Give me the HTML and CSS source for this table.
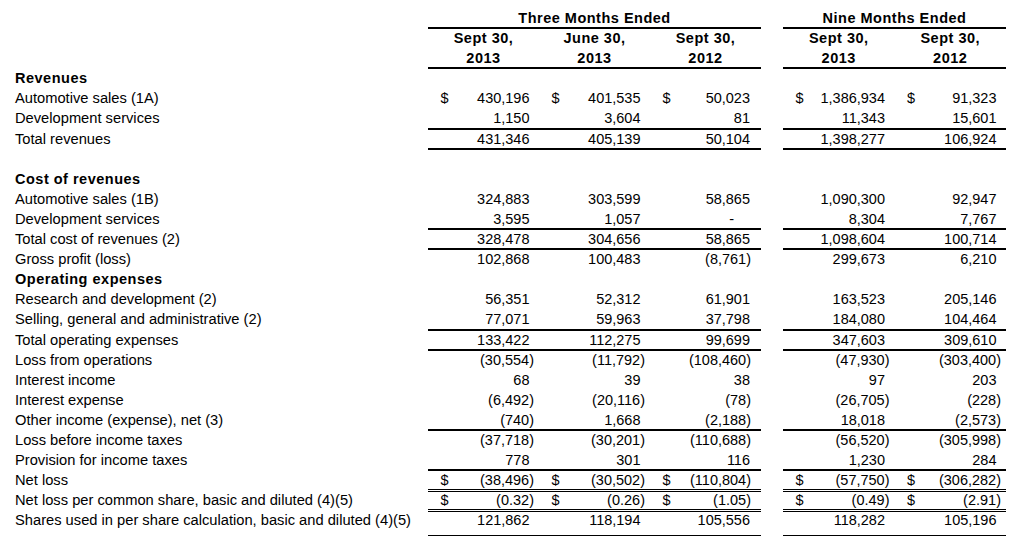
FILE: index.html
```html
<!DOCTYPE html>
<html>
<head>
<meta charset="utf-8">
<link rel="stylesheet" href="styles.css">
</head>
<body>
<div class="sheet">
  <div class="row hdr rule">
    <div class="lbl"></div>
    <div class="c grp3 b">Three Months Ended</div>
    <div class="gap"></div>
    <div class="c grp2 b">Nine Months Ended</div>
  </div>
  <div class="row hdr">
    <div class="lbl"></div>
    <div class="c ctr b">Sept 30,</div>
    <div class="c ctr b">June 30,</div>
    <div class="c ctr b">Sept 30,</div>
    <div class="gap"></div>
    <div class="c ctr b">Sept 30,</div>
    <div class="c ctr b">Sept 30,</div>
  </div>
  <div class="row hdr rule">
    <div class="lbl"></div>
    <div class="c ctr b">2013</div>
    <div class="c ctr b">2013</div>
    <div class="c ctr b">2012</div>
    <div class="gap"></div>
    <div class="c ctr b">2013</div>
    <div class="c ctr b">2012</div>
  </div>

  <div class="row"><div class="lbl b">Revenues</div></div>
  <div class="row">
    <div class="lbl">Automotive sales (1A)</div>
    <div class="c"><span class="cur">$</span><span class="v p">430,196</span></div>
    <div class="c"><span class="cur">$</span><span class="v p">401,535</span></div>
    <div class="c k3"><span class="cur">$</span><span class="v p">50,023</span></div>
    <div class="gap"></div>
    <div class="c"><span class="cur">$</span><span class="v p">1,386,934</span></div>
    <div class="c"><span class="cur">$</span><span class="v p">91,323</span></div>
  </div>
  <div class="row rule">
    <div class="lbl">Development services</div>
    <div class="c"><span class="v p">1,150</span></div>
    <div class="c"><span class="v p">3,604</span></div>
    <div class="c k3"><span class="v p">81</span></div>
    <div class="gap"></div>
    <div class="c"><span class="v p">11,343</span></div>
    <div class="c"><span class="v p">15,601</span></div>
  </div>
  <div class="row rule">
    <div class="lbl">Total revenues</div>
    <div class="c"><span class="v p">431,346</span></div>
    <div class="c"><span class="v p">405,139</span></div>
    <div class="c k3"><span class="v p">50,104</span></div>
    <div class="gap"></div>
    <div class="c"><span class="v p">1,398,277</span></div>
    <div class="c"><span class="v p">106,924</span></div>
  </div>
  <div class="row"></div>

  <div class="row"><div class="lbl b">Cost of revenues</div></div>
  <div class="row">
    <div class="lbl">Automotive sales (1B)</div>
    <div class="c"><span class="v p">324,883</span></div>
    <div class="c"><span class="v p">303,599</span></div>
    <div class="c k3"><span class="v p">58,865</span></div>
    <div class="gap"></div>
    <div class="c"><span class="v p">1,090,300</span></div>
    <div class="c"><span class="v p">92,947</span></div>
  </div>
  <div class="row rule">
    <div class="lbl">Development services</div>
    <div class="c"><span class="v p">3,595</span></div>
    <div class="c"><span class="v p">1,057</span></div>
    <div class="c k3"><span class="v dash">-</span></div>
    <div class="gap"></div>
    <div class="c"><span class="v p">8,304</span></div>
    <div class="c"><span class="v p">7,767</span></div>
  </div>
  <div class="row rule">
    <div class="lbl">Total cost of revenues (2)</div>
    <div class="c"><span class="v p">328,478</span></div>
    <div class="c"><span class="v p">304,656</span></div>
    <div class="c k3"><span class="v p">58,865</span></div>
    <div class="gap"></div>
    <div class="c"><span class="v p">1,098,604</span></div>
    <div class="c"><span class="v p">100,714</span></div>
  </div>
  <div class="row">
    <div class="lbl">Gross profit (loss)</div>
    <div class="c"><span class="v p">102,868</span></div>
    <div class="c"><span class="v p">100,483</span></div>
    <div class="c k3"><span class="v">(8,761)</span></div>
    <div class="gap"></div>
    <div class="c"><span class="v p">299,673</span></div>
    <div class="c"><span class="v p">6,210</span></div>
  </div>
  <div class="row"><div class="lbl b">Operating expenses</div></div>
  <div class="row">
    <div class="lbl">Research and development (2)</div>
    <div class="c"><span class="v p">56,351</span></div>
    <div class="c"><span class="v p">52,312</span></div>
    <div class="c k3"><span class="v p">61,901</span></div>
    <div class="gap"></div>
    <div class="c"><span class="v p">163,523</span></div>
    <div class="c"><span class="v p">205,146</span></div>
  </div>
  <div class="row rule">
    <div class="lbl">Selling, general and administrative (2)</div>
    <div class="c"><span class="v p">77,071</span></div>
    <div class="c"><span class="v p">59,963</span></div>
    <div class="c k3"><span class="v p">37,798</span></div>
    <div class="gap"></div>
    <div class="c"><span class="v p">184,080</span></div>
    <div class="c"><span class="v p">104,464</span></div>
  </div>
  <div class="row rule">
    <div class="lbl">Total operating expenses</div>
    <div class="c"><span class="v p">133,422</span></div>
    <div class="c"><span class="v p">112,275</span></div>
    <div class="c k3"><span class="v p">99,699</span></div>
    <div class="gap"></div>
    <div class="c"><span class="v p">347,603</span></div>
    <div class="c"><span class="v p">309,610</span></div>
  </div>
  <div class="row">
    <div class="lbl">Loss from operations</div>
    <div class="c"><span class="v">(30,554)</span></div>
    <div class="c"><span class="v">(11,792)</span></div>
    <div class="c k3"><span class="v">(108,460)</span></div>
    <div class="gap"></div>
    <div class="c"><span class="v">(47,930)</span></div>
    <div class="c"><span class="v">(303,400)</span></div>
  </div>
  <div class="row">
    <div class="lbl">Interest income</div>
    <div class="c"><span class="v p">68</span></div>
    <div class="c"><span class="v p">39</span></div>
    <div class="c k3"><span class="v p">38</span></div>
    <div class="gap"></div>
    <div class="c"><span class="v p">97</span></div>
    <div class="c"><span class="v p">203</span></div>
  </div>
  <div class="row">
    <div class="lbl">Interest expense</div>
    <div class="c"><span class="v">(6,492)</span></div>
    <div class="c"><span class="v">(20,116)</span></div>
    <div class="c k3"><span class="v">(78)</span></div>
    <div class="gap"></div>
    <div class="c"><span class="v">(26,705)</span></div>
    <div class="c"><span class="v">(228)</span></div>
  </div>
  <div class="row rule">
    <div class="lbl">Other income (expense), net (3)</div>
    <div class="c"><span class="v">(740)</span></div>
    <div class="c"><span class="v p">1,668</span></div>
    <div class="c k3"><span class="v">(2,188)</span></div>
    <div class="gap"></div>
    <div class="c"><span class="v p">18,018</span></div>
    <div class="c"><span class="v">(2,573)</span></div>
  </div>
  <div class="row">
    <div class="lbl">Loss before income taxes</div>
    <div class="c"><span class="v">(37,718)</span></div>
    <div class="c"><span class="v">(30,201)</span></div>
    <div class="c k3"><span class="v">(110,688)</span></div>
    <div class="gap"></div>
    <div class="c"><span class="v">(56,520)</span></div>
    <div class="c"><span class="v">(305,998)</span></div>
  </div>
  <div class="row rule">
    <div class="lbl">Provision for income taxes</div>
    <div class="c"><span class="v p">778</span></div>
    <div class="c"><span class="v p">301</span></div>
    <div class="c k3"><span class="v p">116</span></div>
    <div class="gap"></div>
    <div class="c"><span class="v p">1,230</span></div>
    <div class="c"><span class="v p">284</span></div>
  </div>
  <div class="row dbl">
    <div class="lbl">Net loss</div>
    <div class="c"><span class="cur">$</span><span class="v">(38,496)</span></div>
    <div class="c"><span class="cur">$</span><span class="v">(30,502)</span></div>
    <div class="c k3"><span class="cur">$</span><span class="v">(110,804)</span></div>
    <div class="gap"></div>
    <div class="c"><span class="cur">$</span><span class="v">(57,750)</span></div>
    <div class="c"><span class="cur">$</span><span class="v">(306,282)</span></div>
  </div>
  <div class="row dbl">
    <div class="lbl">Net loss per common share, basic and diluted (4)(5)</div>
    <div class="c"><span class="cur">$</span><span class="v">(0.32)</span></div>
    <div class="c"><span class="cur">$</span><span class="v">(0.26)</span></div>
    <div class="c k3"><span class="cur">$</span><span class="v">(1.05)</span></div>
    <div class="gap"></div>
    <div class="c"><span class="cur">$</span><span class="v">(0.49)</span></div>
    <div class="c"><span class="cur">$</span><span class="v">(2.91)</span></div>
  </div>
  <div class="row dbl last">
    <div class="lbl">Shares used in per share calculation, basic and diluted (4)(5)</div>
    <div class="c"><span class="v p">121,862</span></div>
    <div class="c"><span class="v p">118,194</span></div>
    <div class="c k3"><span class="v p">105,556</span></div>
    <div class="gap"></div>
    <div class="c"><span class="v p">118,282</span></div>
    <div class="c"><span class="v p">105,196</span></div>
  </div>
</div>
</body>
</html>
```

FILE: styles.css
```css
html, body {
  margin: 0;
  padding: 0;
  background: #fff;
}

.sheet {
  padding-top: 8px;
  font-family: "Liberation Sans", Arial, sans-serif;
  font-size: 14.5px;
  color: #000;
}

.row {
  display: grid;
  grid-template-columns: 428px 111px 111px 111px 22px 111.5px 111.5px;
  height: 20.1px;
  line-height: 20.1px;
}

.row.last {
  height: 26px;
}

.lbl {
  padding-left: 15px;
  white-space: nowrap;
  font-size: 14.7px;
}

.lbl.b {
  font-size: 14.5px;
}

.b {
  font-weight: bold;
  letter-spacing: 0.5px;
}

.c {
  display: flex;
  justify-content: space-between;
  padding-left: 12.5px;
  padding-right: 5px;
  white-space: nowrap;
}

.c.k3 {
  padding-right: 10px;
}

.c .v {
  margin-left: auto;
}

.c .v.p {
  padding-right: 4.5px;
}

.c.k3 .v.p {
  padding-right: 1px;
}

.c .v.dash {
  padding-right: 17px;
}

.c.ctr {
  justify-content: center;
  padding: 0;
}

.grp3 {
  grid-column: span 3;
  justify-content: center;
  padding: 0;
}

.grp2 {
  grid-column: span 2;
  justify-content: center;
  padding: 0;
}

.row.rule > .c {
  box-shadow: inset 0 -1px 0 #000, 0 1px 0 #000;
}

.row.dbl > .c {
  box-shadow: inset 0 -1px 0 #000, 0 1px 0 #fff, 0 2px 0 #000;
}
```
